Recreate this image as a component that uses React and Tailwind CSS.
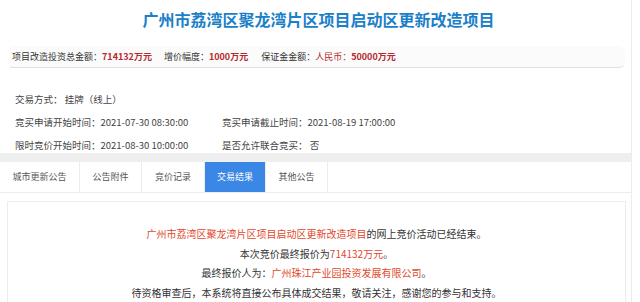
import React from 'react'

const font = { fontFamily: '"Microsoft YaHei", "Noto Sans CJK SC", "Noto Sans", sans-serif' }

const tabs = ['城市更新公告', '公告附件', '竞价记录', '交易结果', '其他公告']
const tabWidths = ['w-[80px]', 'w-[62px]', 'w-[63px]', 'w-[61px]', 'w-[62px]']

export default function App() {
  return (
    <div style={font} className="w-[640px] h-[302px] overflow-hidden bg-white text-[#333]">
      <div className="w-[632px] border-r border-[#ececec]">
        {/* Header */}
        <div className="h-[153px] bg-white">
          <h1 className="pt-[8px] pl-[6px] text-center text-[16px] leading-[22px] font-bold text-[#1a80c8]">
            广州市荔湾区聚龙湾片区项目启动区更新改造项目
          </h1>
          <div className="mt-[16px] ml-[10px] w-[615px] h-[22px] flex items-center pl-[2px] text-[9px] bg-[#fbfbfb] border-b border-[#e2e2e2] rounded-r-[6px]">
            <span>项目改造投资总金额：</span>
            <span className="font-bold text-[#b8282c]">714132万元</span>
            <span className="ml-[12px]">增价幅度：</span>
            <span className="font-bold text-[#b8282c]">1000万元</span>
            <span className="ml-[13px]">保证金金额：</span>
            <span className="text-[#b8282c]">人民币：</span>
            <span className="font-bold text-[#b8282c]">50000万元</span>
          </div>
          <div className="mt-[20px] pl-[15px] text-[9.5px] leading-[23px] text-[#444]">
            <div>交易方式：&nbsp;挂牌（线上）</div>
            <div className="flex">
              <span className="w-[207px]">竞买申请开始时间：2021-07-30 08:30:00</span>
              <span>竞买申请截止时间：2021-08-19 17:00:00</span>
            </div>
            <div className="flex">
              <span className="w-[207px]">限时竞价开始时间：2021-08-30 10:00:00</span>
              <span>是否允许联合竞买：&nbsp;否</span>
            </div>
          </div>
        </div>

        {/* Gray band */}
        <div className="h-[9px] bg-[#efefef]" />

        {/* Tabs */}
        <div className="flex h-[31px] border-b border-[#ececec] bg-white">
          {tabs.map((t, i) => (
            <div
              key={t}
              className={`${tabWidths[i]} flex items-center justify-center text-[9px] border-r border-[#ececec] ${
                i === 3 ? 'bg-[#3a87e6] text-white' : 'text-[#555]'
              }`}
            >
              {t}
            </div>
          ))}
        </div>

        {/* Result box */}
        <div className="mt-[8px] ml-[7px] mr-[5px] h-[120px] border border-[#ececec] pt-[22px] text-center text-[10px] leading-[19.5px] text-[#333]">
          <p>
            <span className="text-[#e0492c]">广州市荔湾区聚龙湾片区项目启动区更新改造项目</span>
            的网上竞价活动已经结束。
          </p>
          <p>
            本次竞价最终报价为<span className="text-[#e0492c]">714132万元</span>。
          </p>
          <p>
            最终报价人为：<span className="text-[#e0492c]">广州珠江产业园投资发展有限公司</span>。
          </p>
          <p>待资格审查后，本系统将直接公布具体成交结果，敬请关注，感谢您的参与和支持。</p>
        </div>
      </div>
    </div>
  )
}
